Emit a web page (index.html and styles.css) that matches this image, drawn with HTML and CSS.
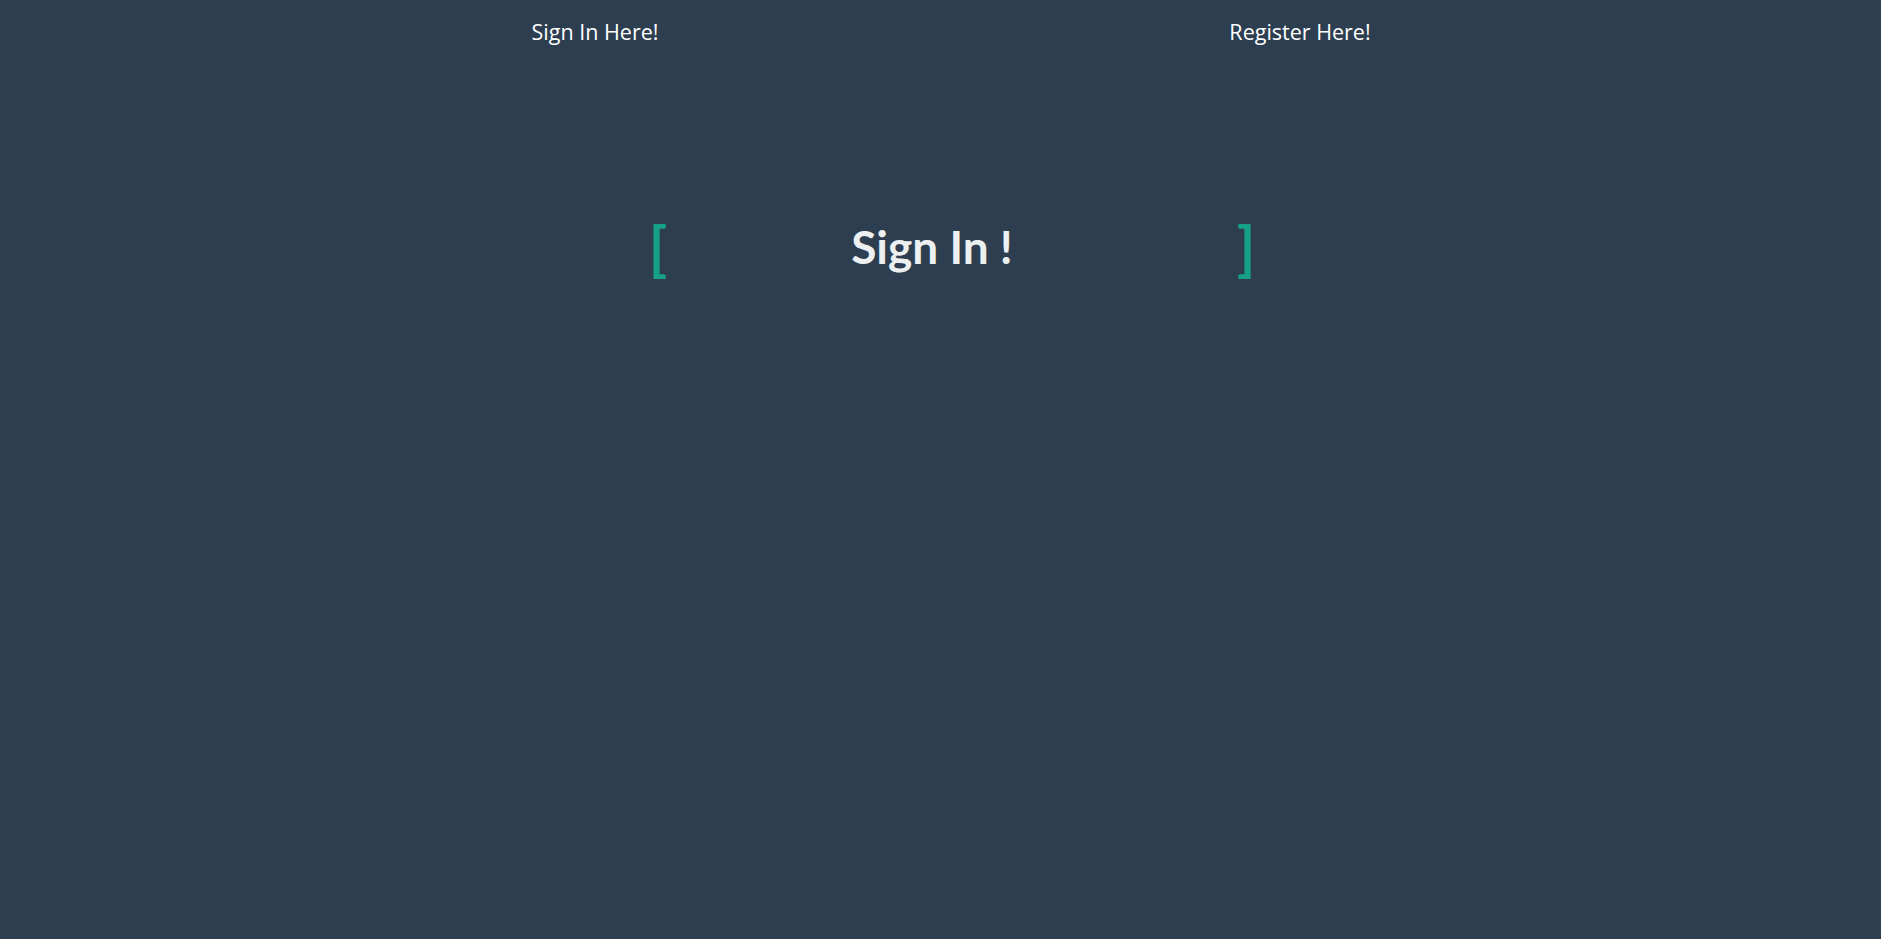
FILE: index.html
```html
<!DOCTYPE html>
<html>
<head>
<meta charset="utf-8">
<link rel="stylesheet" href="styles.css">
</head>
<body>
<nav class="nav">
  <a class="nav-link" href="#">Sign In Here!</a>
  <a class="nav-link" href="#">Register Here!</a>
</nav>
<main class="main">
  <div class="title-box">
    <span class="bracket">[</span>
    <h1 class="title">Sign In !</h1>
    <span class="bracket">]</span>
  </div>
</main>
</body>
</html>
```

FILE: styles.css
```css
html, body {
  margin: 0;
  padding: 0;
  height: 100%;
}
body {
  background: #2c3e50;
  font-family: "Open Sans", sans-serif;
}
.nav {
  display: flex;
  justify-content: center;
  padding-left: 14px;
  padding-top: 17px;
}
.nav-link {
  width: 705px;
  text-align: center;
  color: #ffffff;
  text-decoration: none;
  font-size: 21.5px;
  line-height: 30px;
}
.main {
  display: flex;
  justify-content: center;
  padding-top: 170px;
  padding-left: 23px;
}
.title-box {
  width: 607px;
  display: flex;
  justify-content: space-between;
  align-items: center;
}
.bracket {
  color: #16a085;
  font-family: "Lato", sans-serif;
  font-size: 60px;
  font-weight: 700;
  line-height: 58px;
}
.title {
  margin: 0;
  color: #ecf0f1;
  font-family: "Lato", sans-serif;
  font-size: 46px;
  font-weight: 700;
  line-height: 60px;
  margin-right: 40px;
}
```
